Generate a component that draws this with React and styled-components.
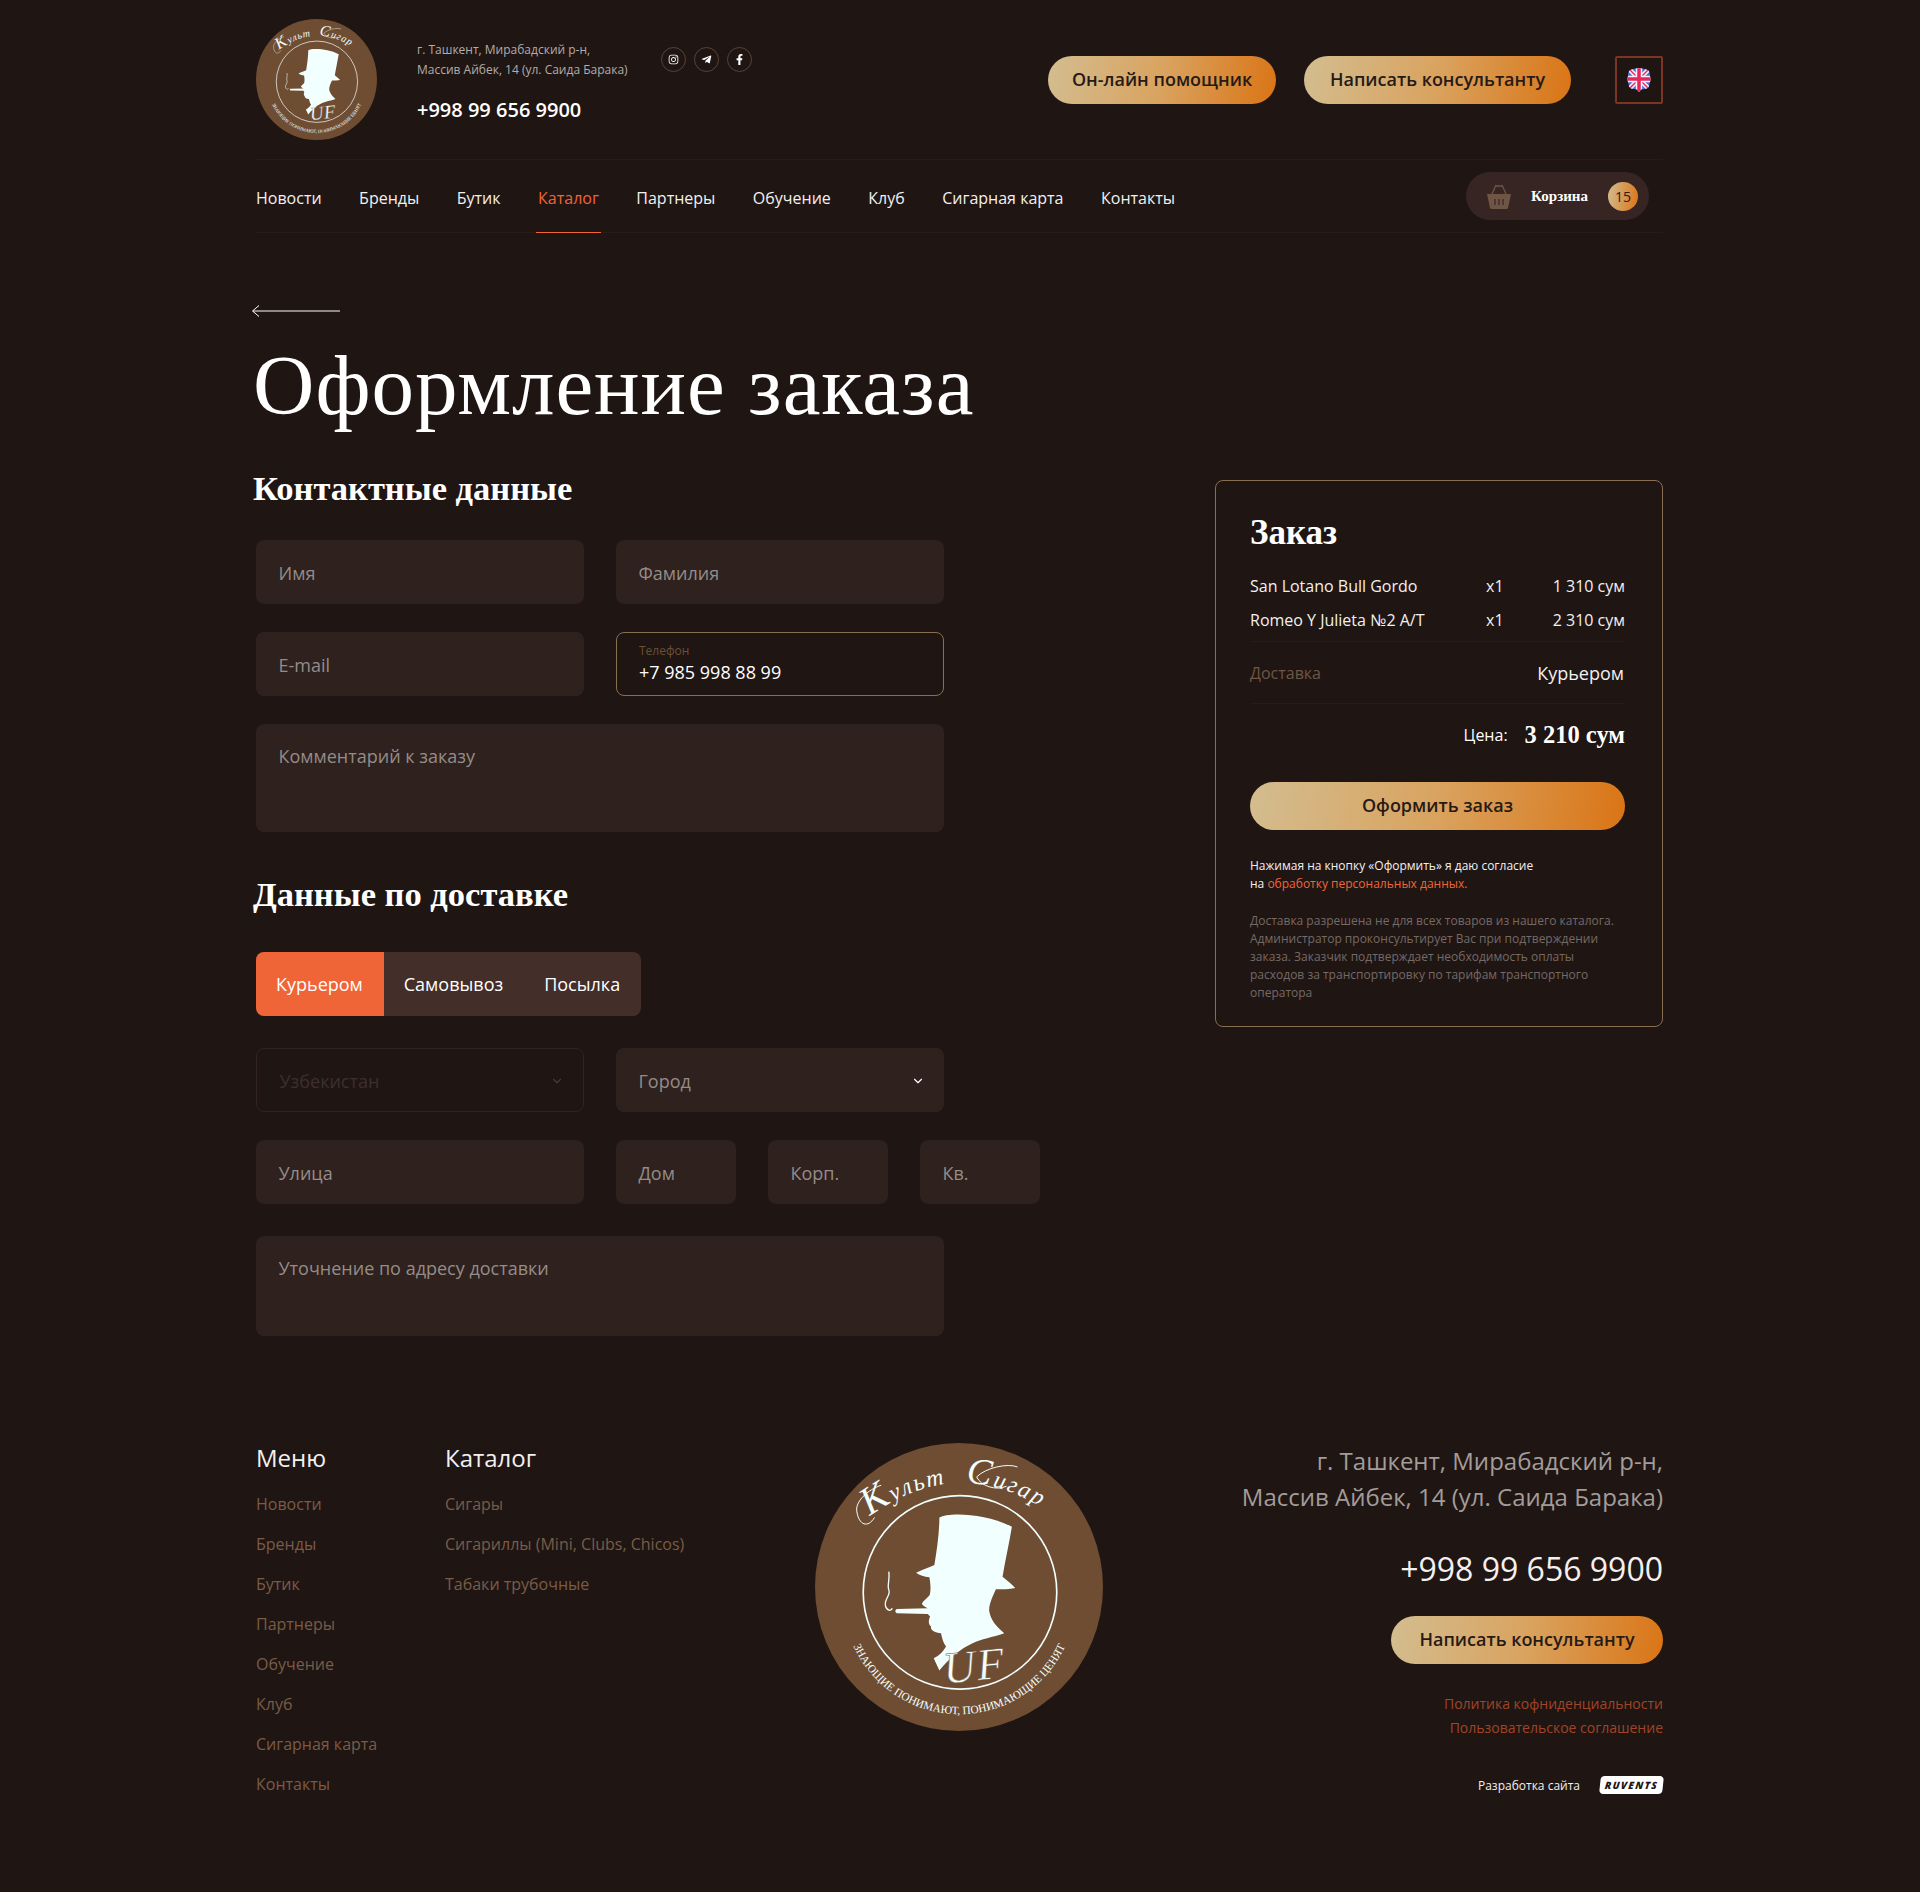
import React from 'react';
import styled, { createGlobalStyle } from 'styled-components';
import { ChevronDown } from 'lucide-react';
import { FaInstagram, FaTelegramPlane, FaFacebookF } from 'react-icons/fa';

const BG = '#1f1513';
const FIELD = '#2e211e';
const ORANGE = '#f06537';
const GOLD = 'linear-gradient(100deg, #d3bd90 0%, #d9a35f 50%, #da7415 100%)';
const SANS = '"Open Sans", "Noto Sans", sans-serif';
const SERIF = '"Liberation Serif", "DejaVu Serif", serif';

const GlobalStyle = createGlobalStyle`
  html, body { margin: 0; padding: 0; background: ${BG}; }
  body { font-family: ${SANS}; color: #fff; }
  * { box-sizing: border-box; }
`;

const Page = styled.div`
  width: 1407px;
  height: 1892px;
  margin-left: 256px;
`;

/* header */
const Header = styled.header`
  height: 160px;
  display: flex;
  align-items: center;
  border-bottom: 1px solid #2b1b16;
`;
const LogoWrap = styled.div`
  width: ${p => p.$size}px;
  height: ${p => p.$size}px;
  flex: none;
`;
const Info = styled.div`
  margin-left: 40px;
  margin-top: 4px;
  width: 244px;
`;
const Address = styled.div`
  font-size: 12px;
  line-height: 20px;
  color: #b3acaa;
`;
const HeadPhone = styled.div`
  margin-top: 16px;
  font-size: 20px;
  line-height: 27px;
  font-weight: 600;
`;
const Socials = styled.div`
  display: flex;
  gap: 8px;
  align-self: flex-start;
  margin-top: 47px;
`;
const Social = styled.a`
  width: 25px;
  height: 25px;
  border-radius: 50%;
  border: 1px solid #5a4234;
  display: flex;
  align-items: center;
  justify-content: center;
  color: #fff;
  font-size: 11px;
`;
const GoldButton = styled.button`
  height: 48px;
  width: ${p => p.$w ? `${p.$w}px` : 'auto'};
  padding: 0 0 2px;
  border: 0;
  border-radius: 24px;
  background: ${GOLD};
  color: #261a16;
  font-family: ${SANS};
  font-size: 18px;
  font-weight: 600;
`;
const HeadButtons = styled.div`
  margin-left: auto;
  display: flex;
  gap: 28px;
`;
const FlagBox = styled.div`
  width: 48px;
  height: 48px;
  margin-left: 44px;
  border: 2px solid #7d3523;
  border-radius: 2px;
  display: flex;
  align-items: center;
  justify-content: center;
`;

/* nav */
const Nav = styled.nav`
  height: 73px;
  display: flex;
  align-items: stretch;
  border-bottom: 1px solid #2b1b16;
`;
const NavList = styled.div`
  display: flex;
  gap: 37.5px;
  padding-top: 3px;
  margin-bottom: -1px;
`;
const NavItem = styled.a`
  display: flex;
  align-items: center;
  padding: 0 2px;
  margin: 0 -2px;
  font-size: 16px;
  color: ${p => p.$active ? ORANGE : '#f3f0ef'};
  border-bottom: 1px solid ${p => p.$active ? ORANGE : 'transparent'};
`;
const Cart = styled.div`
  margin-left: auto;
  margin-right: 14px;
  margin-top: 12px;
  width: 183px;
  height: 48px;
  border-radius: 24px;
  background: #372523;
  display: flex;
  align-items: center;
  padding-left: 21px;
`;
const CartLabel = styled.span`
  margin-left: 20px;
  font-family: ${SERIF};
  font-weight: 700;
  font-size: 15px;
  color: #fff;
  width: 77px;
`;
const CartBadge = styled.span`
  width: 30px;
  height: 29px;
  border-radius: 50%;
  background: linear-gradient(100deg, #d3bd90, #da7415);
  color: #2a1c16;
  font-size: 14px;
  display: flex;
  align-items: center;
  justify-content: center;
`;

/* main */
const Back = styled.div`
  margin-top: 72px;
  margin-left: -5px;
  height: 12px;
  line-height: 0;
`;
const Title = styled.h1`
  margin: 18px 0 0 -3px;
  font-family: ${SERIF};
  font-weight: 400;
  font-size: 85px;
  line-height: 100px;
  letter-spacing: 1px;
  color: #fff;
`;
const Columns = styled.div`
  display: flex;
  justify-content: space-between;
  align-items: flex-start;
`;
const FormCol = styled.div`
  width: 784px;
`;
const Heading = styled.h2`
  margin: ${p => p.$top}px 0 0 -3px;
  font-family: ${SERIF};
  font-weight: 700;
  font-size: 34.5px;
  line-height: 44px;
  color: #fff;
`;
const Row = styled.div`
  display: flex;
  gap: 32px;
  margin-top: ${p => p.$top ?? 28}px;
`;
const Field = styled.div`
  position: relative;
  width: ${p => p.$w ?? 328}px;
  height: ${p => p.$h ?? 64}px;
  padding: ${p => p.$area ? '19px 22.5px' : '1px 22.5px 0'};
  display: flex;
  align-items: ${p => p.$area ? 'flex-start' : 'center'};
  justify-content: space-between;
  border-radius: 8px;
  background: ${FIELD};
  color: #958c89;
  font-size: 18px;
  line-height: 26px;
`;
const DisabledField = styled(Field)`
  background: transparent;
  border: 1px solid #33241f;
  color: #3d302c;
`;
const PhoneField = styled(Field)`
  display: block;
  padding: 10px 22px 0;
  background: transparent;
  border: 1px solid #8a6e50;
  color: #fff;
`;
const FieldLabel = styled.div`
  font-size: 12px;
  line-height: 16px;
  color: #6d5035;
`;
const FieldValue = styled.div`
  margin-top: 1px;
  font-size: 18px;
  line-height: 24px;
`;
const Chevron = styled(ChevronDown)`
  margin-right: -3px;
`;
const Tabs = styled.div`
  display: flex;
  width: 385px;
  height: 64px;
  margin-top: 36px;
  border-radius: 8px;
  overflow: hidden;
  background: #432e2a;
`;
const Tab = styled.div`
  display: flex;
  align-items: center;
  padding: 0 21px 0 20px;
  font-size: 18px;
  color: #fff;
  background: ${p => p.$active ? ORANGE : 'transparent'};
`;

/* order card */
const Card = styled.aside`
  width: 448px;
  height: 547px;
  margin-top: 45px;
  padding: 28px 37px 0 34px;
  border: 1px solid #8a6e50;
  border-radius: 8px;
`;
const CardTitle = styled.div`
  font-family: ${SERIF};
  font-weight: 700;
  font-size: 35px;
  line-height: 48px;
`;
const OrderRow = styled.div`
  display: grid;
  grid-template-columns: 236px 40px 1fr;
  font-size: 16px;
  line-height: 34px;
  color: #f3f0ef;
`;
const OrderPrice = styled.span`
  text-align: right;
`;
const OrderRows = styled.div`
  margin-top: 12px;
  padding-bottom: 4px;
  border-bottom: 1px solid #2b1b16;
`;
const Delivery = styled.div`
  display: flex;
  justify-content: space-between;
  align-items: center;
  height: 62px;
  padding-right: 1px;
  border-bottom: 1px solid #2b1b16;
`;
const DeliveryLabel = styled.span`
  font-size: 16px;
  color: #6f5542;
`;
const DeliveryValue = styled.span`
  font-size: 18px;
  color: #f3f0ef;
`;
const Total = styled.div`
  display: flex;
  justify-content: flex-end;
  align-items: center;
  gap: 17px;
  height: 62px;
  margin-bottom: 16px;
  font-size: 16px;
`;
const TotalValue = styled.span`
  font-family: ${SERIF};
  font-weight: 700;
  font-size: 24.5px;
`;
const Consent = styled.p`
  margin: 27px 0 0;
  font-size: 12px;
  line-height: 18px;
  color: #f3f0ef;
`;
const Accent = styled.a`
  color: ${ORANGE};
`;
const Note = styled.p`
  margin: 19px 0 0;
  font-size: 12px;
  line-height: 18px;
  color: #756a66;
`;

/* footer */
const Footer = styled.footer`
  margin-top: 107px;
  display: grid;
  grid-template-columns: 189px 370px 288px 1fr;
`;
const FootCol = styled.div`
  padding-top: 0;
`;
const FootTitle = styled.div`
  font-size: 24px;
  line-height: 32px;
  color: #f3f0ef;
  margin-top: -1px;
  margin-bottom: 10px;
`;
const FootLink = styled.a`
  display: block;
  font-size: 16px;
  line-height: 40px;
  color: #7a5c46;
`;
const FootRight = styled.div`
  display: flex;
  flex-direction: column;
  align-items: flex-end;
  text-align: right;
`;
const FootAddress = styled.div`
  font-size: 24px;
  line-height: 36px;
  color: #a39c99;
`;
const FootPhone = styled.div`
  margin-top: 32px;
  margin-bottom: 25px;
  font-size: 32px;
  line-height: 44px;
  color: #f3f0ef;
`;
const LegalLinks = styled.div`
  margin-top: 28px;
  font-size: 14px;
  line-height: 24px;
  color: #a04528;
`;
const Dev = styled.div`
  margin-top: 36px;
  display: flex;
  align-items: center;
  gap: 20px;
  font-size: 12px;
  color: #f3f0ef;
`;
const Ruvents = styled.span`
  display: block;
  width: 63px;
  height: 18px;
  border-radius: 4px;
  background: #fff;
  color: #1f1513;
  font-size: 10px;
  line-height: 18px;
  font-weight: 800;
  font-style: italic;
  letter-spacing: 1.3px;
  text-align: center;
  transform: skewX(-6deg);
`;

const SCRIPT = '"Liberation Serif", serif';

const Logo = ({ id }) => (
  <svg width="100%" height="100%" viewBox="46 38 866 866">
    <defs>
      <path id={`${id}-top`} d="M 168 292 Q 470 40 770 262" />
      <path id={`${id}-bottom`} d="M 150 620 A 350 350 0 0 0 810 620" />
    </defs>
    <circle cx="479" cy="471" r="433" fill="#6f4d33" />
    <circle cx="482" cy="487" r="291" fill="none" stroke="#f2ffff" strokeWidth="5" />
    <path
      fill="#f2ffff"
      d="M420 262 C445 246 560 248 638 290 C630 340 618 390 610 440 C625 452 638 462 648 474 C630 478 610 478 590 478 C580 500 568 525 570 545 C575 570 590 590 615 610 C580 622 545 628 520 640 C485 655 445 690 420 722 L403 685 C420 678 432 665 440 650 C432 640 428 625 425 610 C405 608 392 600 395 590 C385 582 388 570 392 560 L385 552 L292 550 C286 546 286 540 292 537 L385 535 C378 530 368 528 368 520 C375 508 392 500 392 490 C395 470 392 455 390 442 C375 440 360 436 350 428 C370 418 390 412 405 405 C412 360 420 310 420 262 Z"
    />
    <path
      fill="none"
      stroke="#f2ffff"
      strokeWidth="4"
      d="M268 425 C272 450 262 465 268 480 C275 495 252 510 258 528 C262 542 275 545 278 535"
    />
    {/* flourishes around the script capitals */}
    <path
      fill="none"
      stroke="#f2ffff"
      strokeWidth="3"
      d="M245 165 C205 178 165 215 172 245 C178 285 205 295 225 262 M655 110 C625 98 560 112 532 140 C545 168 590 182 622 168"
    />
    <text fill="#f2ffff" fontFamily={SCRIPT} fontStyle="italic" fontSize="72" letterSpacing="6" wordSpacing="34">
      <textPath href={`#${id}-top`} startOffset="50%" textAnchor="middle">
        <tspan fontSize="118">К</tspan>ульт <tspan fontSize="112">С</tspan>игар
      </textPath>
    </text>
    <text fill="#f2ffff" fontFamily={SCRIPT} fontSize="34">
      <textPath href={`#${id}-bottom`} startOffset="50%" textAnchor="middle">ЗНАЮЩИЕ ПОНИМАЮТ, ПОНИМАЮЩИЕ ЦЕНЯТ</textPath>
    </text>
    <text x="430" y="752" fill="#f2ffff" stroke="#6f4d33" strokeWidth="1.5" fontFamily={SCRIPT} fontStyle="italic" fontSize="135" letterSpacing="4" transform="rotate(-6 530 700)">UF</text>
  </svg>
);

const Flag = () => (
  <svg width="24" height="26" viewBox="0 0 24 26">
    <defs>
      <clipPath id="flagClip">
        <path d="M6 2 C9 1 15 1 18 2 C22 3 23 5 23 9 C24 12 23 16 22 19 C21 22 18 22 14 22.5 L12 25 L10 22.5 C6 22 3 22 2 19 C1 16 0 12 1 9 C1 5 2 3 6 2 Z" />
      </clipPath>
    </defs>
    <g clipPath="url(#flagClip)">
      <rect width="24" height="26" fill="#4b6fd6" />
      <path d="M0 0 L24 24 M24 0 L0 24" stroke="#f4f2f8" strokeWidth="4.5" />
      <path d="M0 0 L24 24 M24 0 L0 24" stroke="#e8245f" strokeWidth="1.4" />
      <path d="M12 0 V26 M0 12 H24" stroke="#f4f2f8" strokeWidth="6.5" />
      <path d="M12 0 V26 M0 12 H24" stroke="#e8245f" strokeWidth="3.5" />
    </g>
  </svg>
);

const Basket = () => (
  <svg width="24" height="25" viewBox="0 0 24 25" fill="#6f5543">
    <path d="M0 10 H24 L21 24 C21 24.5 20 25 19 25 H5 C4 25 3 24.5 3 24 Z" />
    <path d="M5 10 L9 1 M19 10 L15 1 M9 2 H15" stroke="#6f5543" strokeWidth="1.3" fill="none" />
    <path d="M8 15 V21 M12 15 V21 M16 15 V21" stroke="#372523" strokeWidth="1.2" />
  </svg>
);

const BackArrow = () => (
  <svg width="89" height="12" viewBox="0 0 89 12" fill="none" stroke="#fff" strokeWidth="1">
    <path d="M89 6 H2 M8 .5 L1.5 6 L8 11.5" />
  </svg>
);

const navItems = ['Новости', 'Бренды', 'Бутик', 'Каталог', 'Партнеры', 'Обучение', 'Клуб', 'Сигарная карта', 'Контакты'];
const footMenu = ['Новости', 'Бренды', 'Бутик', 'Партнеры', 'Обучение', 'Клуб', 'Сигарная карта', 'Контакты'];
const footCatalog = ['Сигары', 'Сигариллы (Mini, Clubs, Chicos)', 'Табаки трубочные'];
const orders = [
  { name: 'San Lotano Bull Gordo', price: '1 310 сум' },
  { name: 'Romeo Y Julieta №2 A/T', price: '2 310 сум' },
];

const App = () => (
  <Page>
    <GlobalStyle />
    <Header>
      <LogoWrap $size={121}><Logo id="head" /></LogoWrap>
      <Info>
        <Address>г. Ташкент, Мирабадский р-н,<br />Массив Айбек, 14 (ул. Саида Барака)</Address>
        <HeadPhone>+998 99 656 9900</HeadPhone>
      </Info>
      <Socials>
        <Social><FaInstagram /></Social>
        <Social><FaTelegramPlane /></Social>
        <Social><FaFacebookF /></Social>
      </Socials>
      <HeadButtons>
        <GoldButton $w={228}>Он-лайн помощник</GoldButton>
        <GoldButton $w={267}>Написать консультанту</GoldButton>
      </HeadButtons>
      <FlagBox><Flag /></FlagBox>
    </Header>

    <Nav>
      <NavList>
        {navItems.map(item => (
          <NavItem key={item} $active={item === 'Каталог'}>{item}</NavItem>
        ))}
      </NavList>
      <Cart>
        <Basket />
        <CartLabel>Корзина</CartLabel>
        <CartBadge>15</CartBadge>
      </Cart>
    </Nav>

    <Back><BackArrow /></Back>
    <Title>Оформление заказа</Title>

    <Columns>
      <FormCol>
        <Heading $top={31}>Контактные данные</Heading>
        <Row $top={30}>
          <Field>Имя</Field>
          <Field>Фамилия</Field>
        </Row>
        <Row>
          <Field>E-mail</Field>
          <PhoneField>
            <FieldLabel>Телефон</FieldLabel>
            <FieldValue>+7 985 998 88 99</FieldValue>
          </PhoneField>
        </Row>
        <Row>
          <Field $w={688} $h={108} $area>Комментарий к заказу</Field>
        </Row>
        <Heading $top={40}>Данные по доставке</Heading>
        <Tabs>
          <Tab $active>Курьером</Tab>
          <Tab>Самовывоз</Tab>
          <Tab>Посылка</Tab>
        </Tabs>
        <Row $top={32}>
          <DisabledField>Узбекистан<Chevron size={14} color="#4a3a34" /></DisabledField>
          <Field>Город<Chevron size={14} color="#fff" /></Field>
        </Row>
        <Row>
          <Field>Улица</Field>
          <Field $w={120}>Дом</Field>
          <Field $w={120}>Корп.</Field>
          <Field $w={120}>Кв.</Field>
        </Row>
        <Row $top={32}>
          <Field $w={688} $h={100} $area>Уточнение по адресу доставки</Field>
        </Row>
      </FormCol>

      <Card>
        <CardTitle>Заказ</CardTitle>
        <OrderRows>
          {orders.map(o => (
            <OrderRow key={o.name}>
              <span>{o.name}</span>
              <span>x1</span>
              <OrderPrice>{o.price}</OrderPrice>
            </OrderRow>
          ))}
        </OrderRows>
        <Delivery>
          <DeliveryLabel>Доставка</DeliveryLabel>
          <DeliveryValue>Курьером</DeliveryValue>
        </Delivery>
        <Total>
          <span>Цена:</span>
          <TotalValue>3 210 сум</TotalValue>
        </Total>
        <GoldButton $w={375}>Оформить заказ</GoldButton>
        <Consent>
          Нажимая на кнопку «Оформить» я даю согласие<br />
          на <Accent>обработку персональных данных.</Accent>
        </Consent>
        <Note>
          Доставка разрешена не для всех товаров из нашего каталога. Администратор проконсультирует Вас при подтверждении заказа. Заказчик подтверждает необходимость оплаты расходов за транспортировку по тарифам транспортного оператора
        </Note>
      </Card>
    </Columns>

    <Footer>
      <FootCol>
        <FootTitle>Меню</FootTitle>
        {footMenu.map(item => <FootLink key={item}>{item}</FootLink>)}
      </FootCol>
      <FootCol>
        <FootTitle>Каталог</FootTitle>
        {footCatalog.map(item => <FootLink key={item}>{item}</FootLink>)}
      </FootCol>
      <LogoWrap $size={288}><Logo id="foot" /></LogoWrap>
      <FootRight>
        <FootAddress>г. Ташкент, Мирабадский р-н,<br />Массив Айбек, 14 (ул. Саида Барака)</FootAddress>
        <FootPhone>+998 99 656 9900</FootPhone>
        <GoldButton $w={272}>Написать консультанту</GoldButton>
        <LegalLinks>Политика кофниденциальности<br />Пользовательское соглашение</LegalLinks>
        <Dev>Разработка сайта<Ruvents>RUVENTS</Ruvents></Dev>
      </FootRight>
    </Footer>
  </Page>
);

export default App;
